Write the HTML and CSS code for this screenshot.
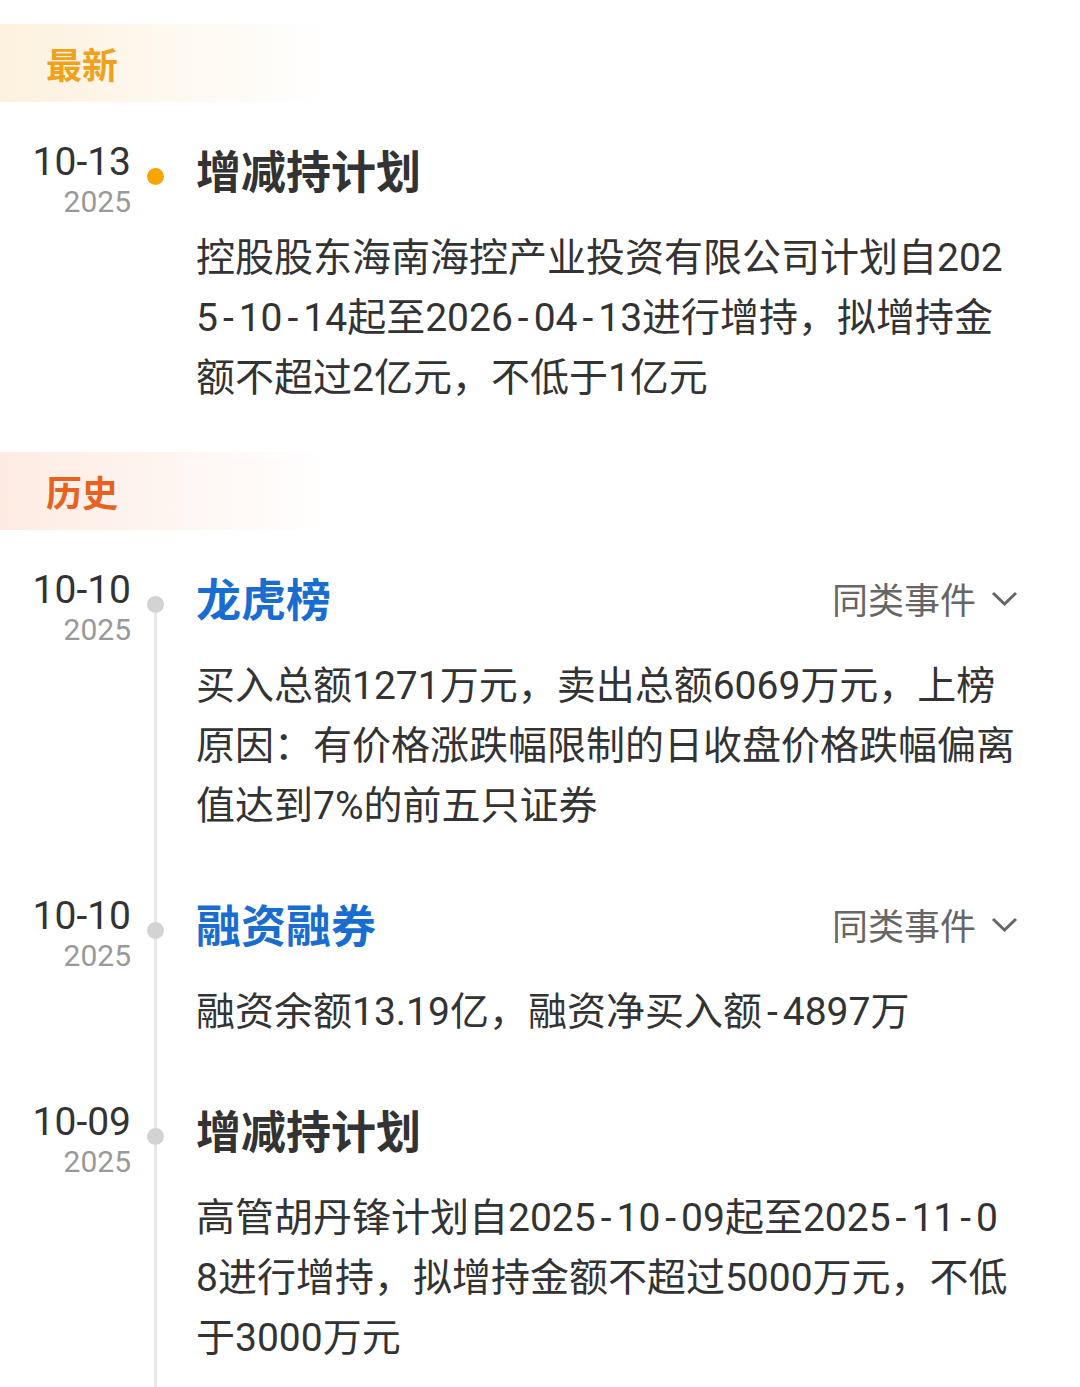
FILE: index.html
```html
<!DOCTYPE html>
<html lang="zh-CN">

<head>
    <meta charset="UTF-8">
    <meta name="viewport" content="width=device-width, initial-scale=1.0">
    <title>大事提醒</title>
    <link rel="stylesheet" href="styles.css">
</head>

<body>
    <div class="timeline">
        <!-- 最新 -->
        <div class="group-head group-latest">最新</div>

        <div class="event event-latest">
            <div class="event-date">
                <div class="date-md">10-13</div>
                <div class="date-yr">2025</div>
            </div>
            <div class="event-axis">
                <i class="axis-top"></i>
                <i class="axis-dot"></i>
                <i class="axis-rest"></i>
            </div>
            <div class="event-body">
                <div class="event-head">
                    <h3 class="event-title">增减持计划</h3>
                </div>
                <p class="event-text">控股股东海南海控产业投资有限公司计划自2025<span class="dash">-</span>10<span class="dash">-</span>14起至2026<span class="dash">-</span>04<span class="dash">-</span>13进行增持，拟增持金额不超过2亿元，不低于1亿元</p>
            </div>
        </div>

        <!-- 历史 -->
        <div class="group-head group-history">历史</div>

        <div class="event event-first">
            <div class="event-date">
                <div class="date-md">10-10</div>
                <div class="date-yr">2025</div>
            </div>
            <div class="event-axis">
                <i class="axis-top"></i>
                <i class="axis-dot"></i>
                <i class="axis-rest"></i>
            </div>
            <div class="event-body">
                <div class="event-head">
                    <h3 class="event-title is-link">龙虎榜</h3>
                    <span class="same-kind">同类事件
                        <svg width="27" height="15" viewBox="0 0 27 15"><polyline points="2,2 13.5,13 25,2" /></svg>
                    </span>
                </div>
                <p class="event-text">买入总额1271万元，卖出总额6069万元，上榜原因：有价格涨跌幅限制的日收盘价格跌幅偏离值达到7%的前五只证券</p>
            </div>
        </div>

        <div class="event">
            <div class="event-date">
                <div class="date-md">10-10</div>
                <div class="date-yr">2025</div>
            </div>
            <div class="event-axis">
                <i class="axis-top"></i>
                <i class="axis-dot"></i>
                <i class="axis-rest"></i>
            </div>
            <div class="event-body">
                <div class="event-head">
                    <h3 class="event-title is-link">融资融券</h3>
                    <span class="same-kind">同类事件
                        <svg width="27" height="15" viewBox="0 0 27 15"><polyline points="2,2 13.5,13 25,2" /></svg>
                    </span>
                </div>
                <p class="event-text">融资余额13.19亿，融资净买入额<span class="dash">-</span>4897万</p>
            </div>
        </div>

        <div class="event">
            <div class="event-date">
                <div class="date-md">10-09</div>
                <div class="date-yr">2025</div>
            </div>
            <div class="event-axis">
                <i class="axis-top"></i>
                <i class="axis-dot"></i>
                <i class="axis-rest"></i>
            </div>
            <div class="event-body">
                <div class="event-head">
                    <h3 class="event-title">增减持计划</h3>
                </div>
                <p class="event-text">高管胡丹锋计划自2025<span class="dash">-</span>10<span class="dash">-</span>09起至2025<span class="dash">-</span>11<span class="dash">-</span>08进行增持，拟增持金额不超过5000万元，不低于3000万元</p>
            </div>
        </div>
    </div>
</body>

</html>
```

FILE: styles.css
```css
body {
    margin: 0;
    background-color: #fff;
    color: #333;
    font-family: Roboto, "Noto Sans CJK SC", sans-serif;
}

/* section labels */
.group-head {
    margin-top: 24px;
    height: 78px;
    padding-left: 46px;
    display: flex;
    align-items: center;
    font-family: "Noto Sans CJK SC", sans-serif;
    font-size: 36px;
    font-weight: 700;
}

.group-latest {
    color: #f1a21c;
    background: linear-gradient(to right, #fdf1de, #fff 330px);
}

.group-history {
    color: #e8621f;
    background: linear-gradient(to right, #fdebe2, #fff 330px);
}

/* one event row */
.event {
    display: flex;
}

.event-date {
    width: 131px;
    padding-top: 38px;
    text-align: right;
    font-family: Roboto, sans-serif;
}

.date-md {
    font-size: 39px;
    line-height: 44px;
    color: #333;
}

.date-yr {
    font-size: 30px;
    line-height: 36px;
    color: #999;
}

.event-axis {
    width: 48px;
    display: flex;
    flex-direction: column;
    align-items: center;
    flex: none;
}

.axis-top {
    height: 66px;
    width: 3px;
    background-color: #e7e7e7;
}

.axis-dot {
    width: 17px;
    height: 17px;
    border-radius: 50%;
    background-color: #d3d3d3;
    flex: none;
}

.axis-rest {
    flex: 1;
    width: 3px;
    background-color: #e7e7e7;
}

.event-first .axis-top,
.event-latest .axis-top,
.event-latest .axis-rest {
    background-color: transparent;
}

.event-latest .axis-dot {
    background-color: #f8a500;
}

.event-body {
    flex: 1;
    min-width: 0;
    padding: 38px 62px 20px 17px;
}

.event-head {
    height: 60px;
    display: flex;
    align-items: center;
    justify-content: space-between;
}

.event-title {
    margin: 0;
    font-family: "Noto Sans CJK SC", sans-serif;
    font-size: 45px;
    font-weight: 700;
    line-height: 60px;
    color: #333;
}

.event-title.is-link {
    color: #1a6dd0;
}

.same-kind {
    display: flex;
    align-items: center;
    gap: 15px;
    font-family: "Noto Sans CJK SC", sans-serif;
    font-size: 36px;
    color: #666;
}

.same-kind svg polyline {
    fill: none;
    stroke: #666;
    stroke-width: 3;
}

.event-text {
    margin: 28px 0 0;
    font-size: 39px;
    line-height: 60px;
    color: #333;
    word-break: break-all;
}

/* hyphens in the body are about a digit wide */
.dash {
    padding: 0 5px;
}
```
